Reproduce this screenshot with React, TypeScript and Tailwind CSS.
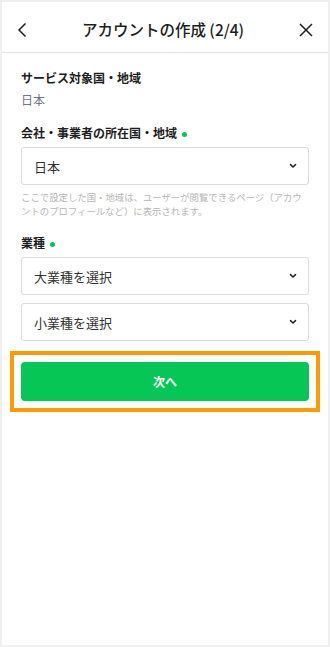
const Chevron = () => (
  <svg width="8" height="6" viewBox="0 0 8 6" className="shrink-0">
    <path d="M1.5 1.6 L4 4 L6.5 1.6" fill="none" stroke="#222" strokeWidth="1.5" strokeLinecap="round" strokeLinejoin="round" />
  </svg>
);

const Select: React.FC<{ label: string }> = ({ label }) => (
  <div className="flex h-[38px] items-center justify-between rounded-[3px] border border-[#dcdcdc] pl-[12px] pr-[11px]">
    <span className="text-[13px] leading-none text-[#333]">{label}</span>
    <Chevron />
  </div>
);

const Dot = () => <span className="ml-[5px] inline-block h-[5px] w-[5px] rounded-full bg-[#06c755] align-middle" />;

const App: React.FC = () => {
  return (
    <div
      className="h-[647px] w-[330px] bg-[#efefef] p-[2px]"
      style={{ fontFamily: '"Noto Sans CJK JP", "Noto Sans", sans-serif' }}
    >
      <div className="flex h-full flex-col bg-white">
        <header className="flex h-[51px] shrink-0 items-center justify-between border-b border-[#e3e3e3] px-[14px] pt-[5px]">
          <svg width="12" height="16" viewBox="0 0 12 16">
            <path d="M9.5 1.5 L3 8 L9.5 14.5" fill="none" stroke="#1e1e1e" strokeWidth="1.5" />
          </svg>
          <h1 className="text-[15.5px] font-medium leading-none text-[#1e1e1e]">
            アカウントの作成 (2/4)
          </h1>
          <svg width="16" height="16" viewBox="0 0 16 16">
            <path d="M2 2 L14 14 M14 2 L2 14" fill="none" stroke="#1e1e1e" strokeWidth="1.5" />
          </svg>
        </header>

        <div className="flex flex-col px-[19px] pt-[17px]">
          <p className="text-[12px] font-bold leading-[16px] text-[#1e1e1e]">サービス対象国・地域</p>
          <p className="mt-[6px] text-[12px] leading-[16px] text-[#6e7485]">日本</p>

          <p className="mt-[17px] text-[12px] font-bold leading-[16px] text-[#1e1e1e]">
            会社・事業者の所在国・地域
            <Dot />
          </p>
          <div className="mt-[6px]">
            <Select label="日本" />
          </div>
          <p className="mt-[5px] text-[9.4px] leading-[14px] text-[#b7b7b7]">
            ここで設定した国・地域は、ユーザーが閲覧できるページ（アカウ
            <br />
            ントのプロフィールなど）に表示されます。
          </p>

          <p className="mt-[17px] text-[12px] font-bold leading-[16px] text-[#1e1e1e]">
            業種
            <Dot />
          </p>
          <div className="mt-[6px] flex flex-col gap-[8px]">
            <Select label="大業種を選択" />
            <Select label="小業種を選択" />
          </div>

          <div className="-mx-[11px] mt-[10px] border-4 border-[#ff9a00] p-[7px]">
            <button className="flex h-[39px] w-full items-center justify-center rounded-[4px] bg-[#06c755] text-[12px] font-bold text-white">
              次へ
            </button>
          </div>
        </div>
      </div>
    </div>
  );
};

export default App;
